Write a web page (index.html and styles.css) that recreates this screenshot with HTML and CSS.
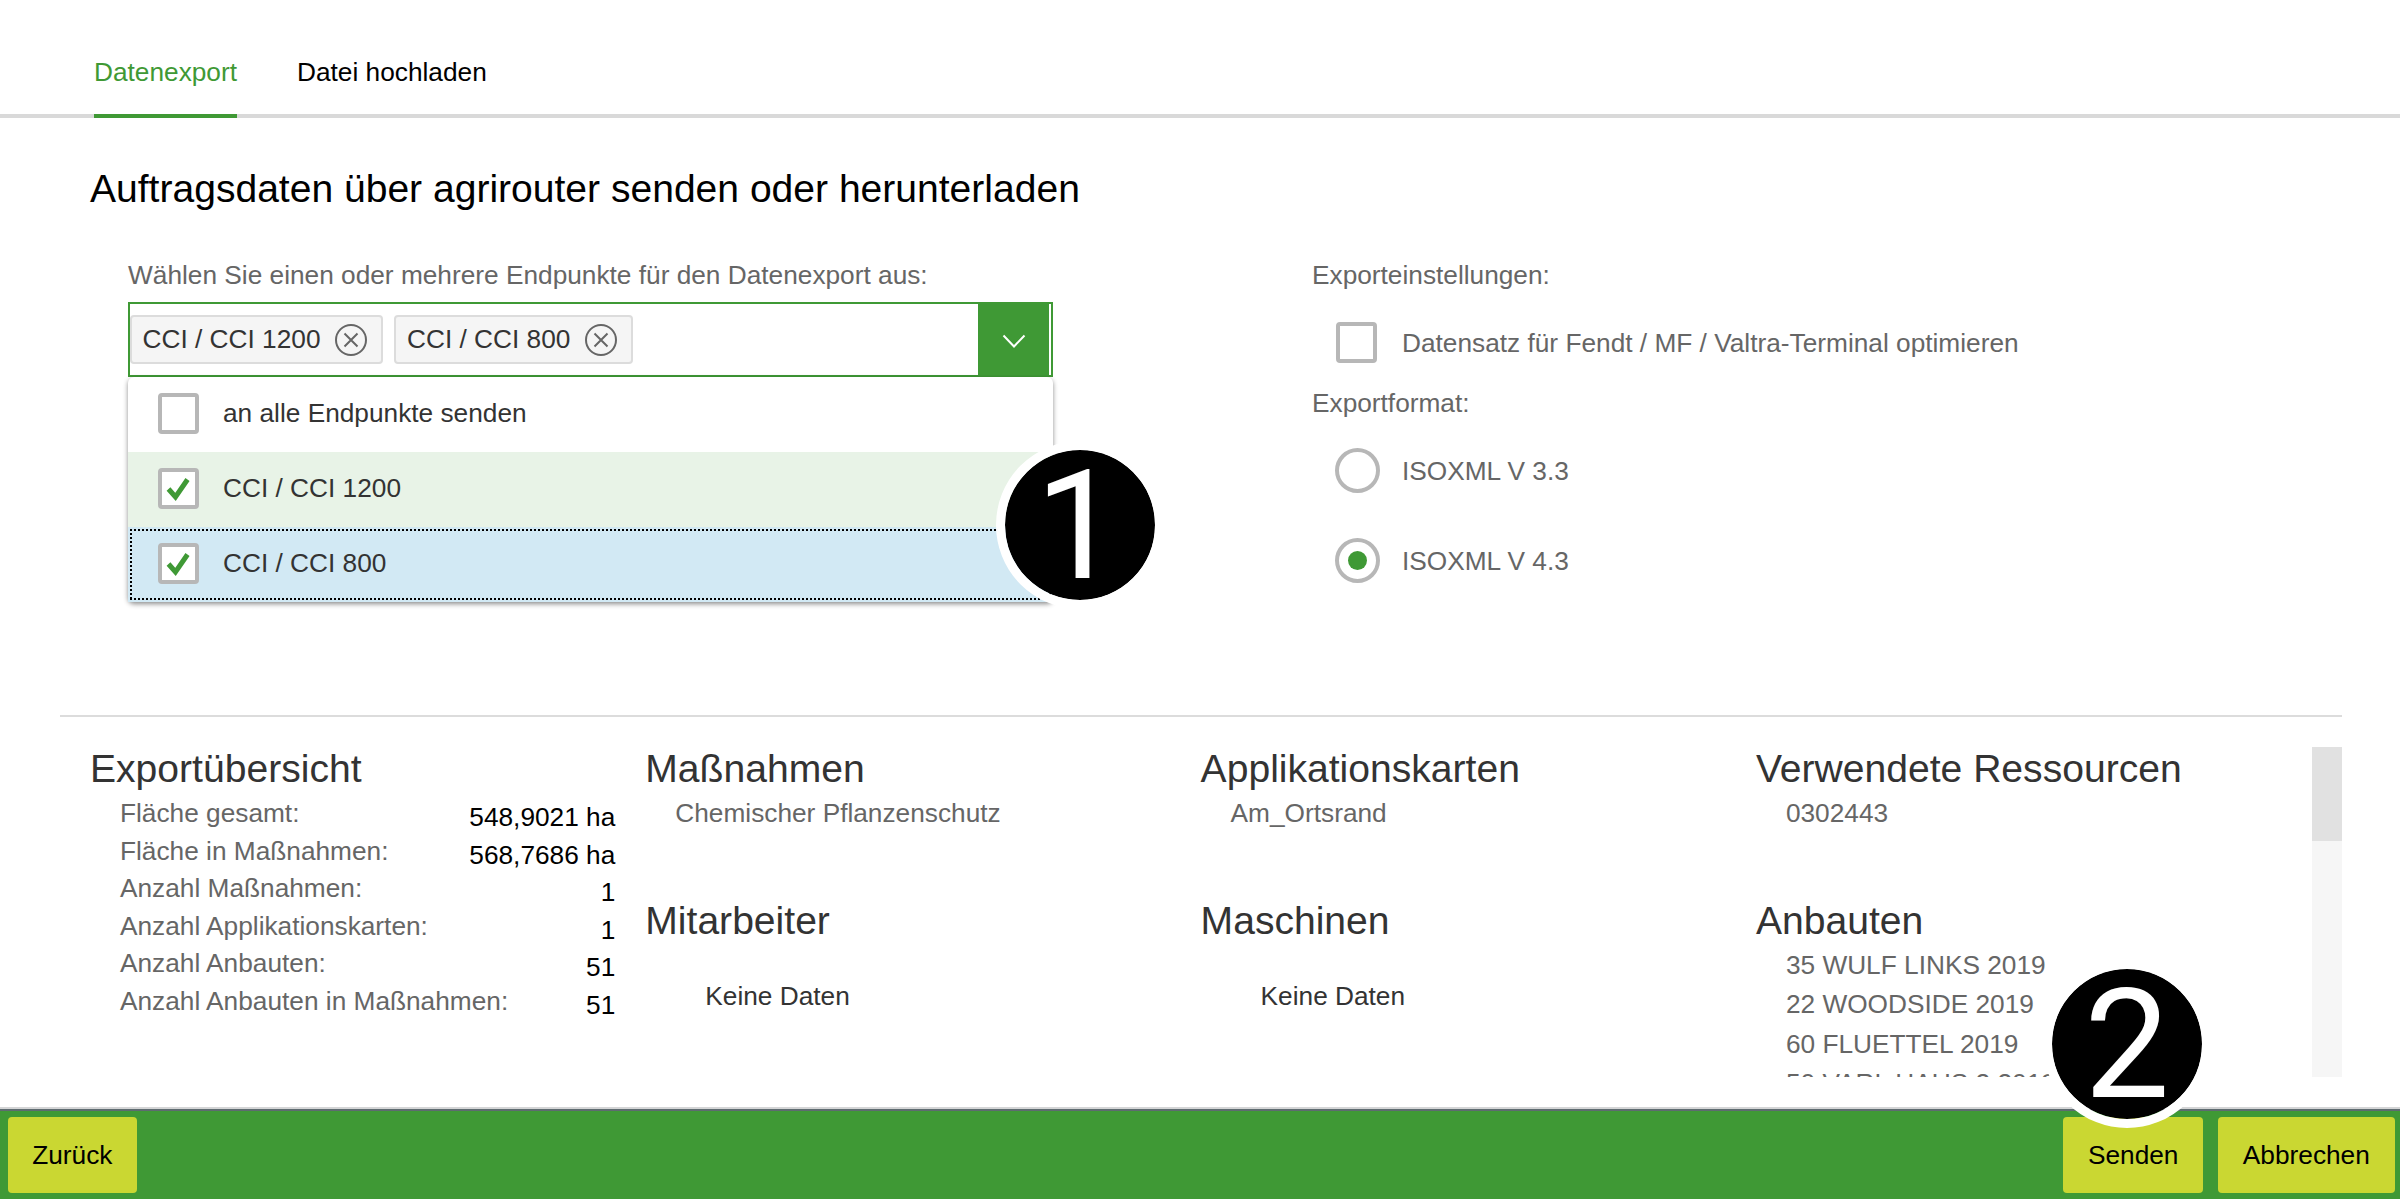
FILE: index.html
```html
<!DOCTYPE html>
<html lang="de">
<head>
<meta charset="utf-8">
<title>Datenexport</title>
<link rel="stylesheet" href="styles.css">
</head>
<body>
<div class="page">
  <nav class="tabs">
    <a class="tab tab-active">Datenexport</a>
    <a class="tab">Datei hochladen</a>
  </nav>

  <main class="content">
    <h1 class="title">Auftragsdaten über agrirouter senden oder herunterladen</h1>
    <div class="settings">
      <section class="endpoints">
        <div class="label">Wählen Sie einen oder mehrere Endpunkte für den Datenexport aus:</div>
        <div class="combo">
          <div class="tokens">
            <span class="token"><span class="token-text">CCI / CCI 1200</span>
              <svg class="remove" viewBox="0 0 32 32"><circle cx="16" cy="16" r="15"/><path d="M9.500 9.500l13 13M22.500 9.500l-13 13"/></svg></span>
            <span class="token"><span class="token-text">CCI / CCI 800</span>
              <svg class="remove" viewBox="0 0 32 32"><circle cx="16" cy="16" r="15"/><path d="M9.500 9.500l13 13M22.500 9.500l-13 13"/></svg></span>
          </div>
          <div class="arrow"><svg viewBox="0 0 24 14"><path d="M1.500 1.500L12 12.500L22.500 1.500"/></svg></div>
        </div>
        <div class="list">
          <div class="option"><span class="box"></span>an alle Endpunkte senden</div>
          <div class="option selected"><span class="box"><svg viewBox="0 0 33 33"><path d="M6.500 17L13.500 25L25.500 7.500"/></svg></span>CCI / CCI 1200</div>
          <div class="option focused"><span class="box"><svg viewBox="0 0 33 33"><path d="M6.500 17L13.500 25L25.500 7.500"/></svg></span>CCI / CCI 800</div>
        </div>
      </section>
      <section class="format">
        <div class="label">Exporteinstellungen:</div>
        <div class="choice choice-check"><span class="box"></span>Datensatz für Fendt / MF / Valtra-Terminal optimieren</div>
        <div class="label">Exportformat:</div>
        <div class="choice"><span class="radio"></span>ISOXML V 3.3</div>
        <div class="choice"><span class="radio radio-on"></span>ISOXML V 4.3</div>
      </section>
    </div>

    <div class="overview">
      <div class="columns">
        <section class="column">
          <h2>Exportübersicht</h2>
          <dl class="facts">
            <dt>Fläche gesamt:</dt><dd>548,9021 ha</dd>
            <dt>Fläche in Maßnahmen:</dt><dd>568,7686 ha</dd>
            <dt>Anzahl Maßnahmen:</dt><dd>1</dd>
            <dt>Anzahl Applikationskarten:</dt><dd>1</dd>
            <dt>Anzahl Anbauten:</dt><dd>51</dd>
            <dt>Anzahl Anbauten in Maßnahmen:</dt><dd>51</dd>
          </dl>
        </section>
        <section class="column">
          <div class="group"><h2>Maßnahmen</h2><p class="item">Chemischer Pflanzenschutz</p></div>
          <div class="group"><h2>Mitarbeiter</h2><p class="empty">Keine Daten</p></div>
        </section>
        <section class="column">
          <div class="group"><h2>Applikationskarten</h2><p class="item">Am_Ortsrand</p></div>
          <div class="group"><h2>Maschinen</h2><p class="empty">Keine Daten</p></div>
        </section>
        <section class="column">
          <div class="group"><h2>Verwendete Ressourcen</h2><p class="item">0302443</p></div>
          <div class="group"><h2>Anbauten</h2>
            <p class="item">35 WULF LINKS 2019</p>
            <p class="item">22 WOODSIDE 2019</p>
            <p class="item">60 FLUETTEL 2019</p>
            <p class="item">50 VARL HAUS 2 2019</p>
          </div>
        </section>
      </div>
      <div class="scrollbar"><div class="thumb"></div></div>
    </div>
  </main>

  <footer class="footer">
    <button class="button">Zurück</button>
    <div class="actions">
      <button class="button">Senden</button>
      <button class="button">Abbrechen</button>
    </div>
  </footer>

  <div class="marker marker-one">1</div>
  <div class="marker marker-two">2</div>
</div>
</body>
</html>
```
FILE: styles.css
```css
* { box-sizing: border-box; }

body {
  margin: 0;
  background: #fff;
  color: #333;
  font: 26.25px/38px "Liberation Sans", Arial, sans-serif;
}

h1, h2, p, dl, dd { margin: 0; font-weight: 400; }

.page {
  position: relative;
  display: flex;
  flex-direction: column;
  width: 2400px;
  height: 1200px;
  padding-bottom: 1px;
  overflow: hidden;
}

/* Tabs */
.tabs {
  display: flex;
  gap: 60px;
  height: 118px;
  padding: 53px 0 0 94px;
  border-bottom: 4px solid #d9d9d9;
}
.tab { height: 65px; color: #000; }
.tab-active { color: #3f9935; border-bottom: 4px solid #3f9935; }

.content {
  flex: 1;
  display: flex;
  flex-direction: column;
  padding: 47px 58px 0 60px;
}
.title {
  padding-left: 30px;
  font-size: 39.05px;
  line-height: 48px;
  color: #000;
}

/* Export settings */
.settings {
  display: grid;
  grid-template-columns: 925px 1fr;
  column-gap: 259px;
  height: 502px;
  padding: 43px 0 0 68px;
}
.label { color: #666; }

.combo {
  display: flex;
  justify-content: space-between;
  height: 75px;
  margin-top: 8px;
  padding-right: 2px;
  border: 2px solid #3f9935;
}
.tokens { display: flex; align-items: center; gap: 11px; }
.token {
  display: flex;
  align-items: center;
  gap: 15px;
  height: 49px;
  padding: 0 14px 0 10.5px;
  border: 2px solid #dcdcdc;
  border-radius: 4px;
  background: #f5f5f5;
}
.token-text { padding-bottom: 2px; }
.remove { width: 32px; height: 32px; fill: none; stroke: #666; stroke-width: 2; }
.arrow {
  display: flex;
  align-items: center;
  justify-content: center;
  width: 71px;
  background: #3f9935;
}
.arrow svg { width: 24px; height: 14px; margin-top: 3px; fill: none; stroke: #fff; stroke-width: 2; }

.list {
  border-radius: 6px;
  box-shadow: 0 2px 5px rgba(0, 0, 0, .45);
}
.option {
  display: flex;
  align-items: center;
  gap: 24px;
  height: 75px;
  padding: 0 0 4px 30px;
}
.option .box { margin-top: 2px; }
.selected { background: #e8f3e7; }
.focused {
  background:
    repeating-linear-gradient(90deg, #000 0 2px, transparent 2px 4px) 2px 2px / calc(100% - 4px) 2px no-repeat,
    repeating-linear-gradient(90deg, #000 0 2px, transparent 2px 4px) 2px 71px / calc(100% - 4px) 2px no-repeat,
    repeating-linear-gradient(#000 0 2px, transparent 2px 4px) 2px 2px / 2px 71px no-repeat,
    repeating-linear-gradient(#000 0 2px, transparent 2px 4px) 921px 2px / 2px 71px no-repeat,
    #d2e9f4;
}
.box {
  flex: none;
  width: 41px;
  height: 41px;
  border: 4px solid #b7b7b7;
  border-radius: 4px;
  background: #fff;
}
.box svg { display: block; width: 33px; height: 33px; fill: none; stroke: #3f9935; stroke-width: 5; }

.choice {
  display: flex;
  align-items: center;
  gap: 22px;
  height: 90px;
  padding: 7px 0 0 23px;
  color: #666;
}
.choice-check { gap: 25px; padding-left: 24px; }
.radio {
  display: flex;
  align-items: center;
  justify-content: center;
  width: 45px;
  height: 45px;
  border: 4px solid #b7b7b7;
  border-radius: 50%;
}
.radio-on::before { content: ""; width: 19px; height: 19px; border-radius: 50%; background: #3f9935; }

/* Overview */
.overview {
  display: flex;
  justify-content: space-between;
  height: 362px;
  padding-top: 30px;
  border-top: 2px solid #dcdcdc;
}
.columns {
  display: grid;
  grid-template-columns: repeat(4, 555.3px);
  width: 2252px;
  height: 330px;
  padding-left: 30px;
  overflow: hidden;
}
h2 { margin-bottom: 3px; font-size: 39.1px; line-height: 44px; }
.group { height: 152px; }
.item { padding-left: 30px; line-height: 39.4px; color: #666; }
.empty { padding: 31px 0 0 60px; }
.facts {
  display: grid;
  grid-template-columns: minmax(0, 1fr) auto;
  grid-auto-rows: 37.5px;
  padding: 1px 30px 0;
  line-height: 37.5px;
  white-space: nowrap;
}
.facts dt { color: #666; }
.facts dd { padding-top: 4px; color: #000; text-align: right; }
.scrollbar { width: 30px; height: 330px; background: #f6f6f6; }
.thumb { height: 94px; background: #e1e1e1; }

/* Footer */
.footer {
  display: flex;
  justify-content: space-between;
  height: 90px;
  padding: 6px 5.5px 0 7.5px;
  border-top: 2px solid #5e6b70;
  box-shadow: 0 -2px #d4d5d6;
  background: #3f9935;
}
.actions { display: flex; gap: 15px; }
.button {
  height: 76px;
  padding: 0 24.7px;
  border: 0;
  border-radius: 4px;
  background: #cad732;
  color: #000;
  font: inherit;
}

/* Step markers laid over the form */
.marker {
  position: absolute;
  width: 168px;
  height: 168px;
  border: 9px solid #fff;
  border-radius: 50%;
  background: #000;
  background-clip: padding-box;
  color: #fff;
  font: 152px/153px Roboto, sans-serif;
  text-align: center;
}
.marker-one { left: 996px; top: 441px; text-indent: -4px; }
.marker-two { left: 2043px; top: 960px; }
```
